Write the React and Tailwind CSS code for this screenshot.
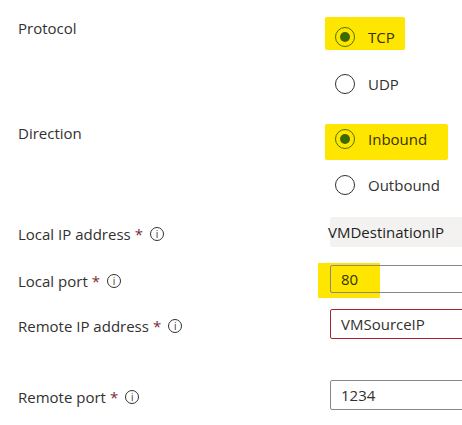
import React from "react";

const font = { fontFamily: '"Open Sans", "Noto Sans", sans-serif' };

const InfoIcon = () => (
  <span className="inline-flex items-center justify-center w-[14px] h-[14px] rounded-full border border-[#323130] text-[10px] leading-none text-[#323130] ml-[7px]">
    i
  </span>
);

const Radio = ({ label, checked }) => (
  <div className="flex items-center h-5 gap-[13px]">
    {checked ? (
      <span className="w-5 h-5 shrink-0 rounded-full border border-[#4a7300] flex items-center justify-center">
        <span className="w-[10px] h-[10px] rounded-full bg-[#3e6900]" />
      </span>
    ) : (
      <span className="w-5 h-5 shrink-0 rounded-full border border-[#323130] bg-white" />
    )}
    <span className={checked ? "text-[#363200]" : "text-[#323130]"}>{label}</span>
  </div>
);

const Label = ({ children, info = true }) => (
  <div className="w-[330px] shrink-0 pl-[18px] flex items-center pt-[4px] text-[#323130]">
    <span>{children}</span>
    {info && (
      <>
        <span className="ml-[4px] text-[#7a2a3a]">*</span>
        <InfoIcon />
      </>
    )}
  </div>
);

export default function App() {
  return (
    <div className="w-[462px] h-[425px] bg-white overflow-hidden text-[15px] leading-5" style={font}>
      {/* Protocol */}
      <div className="flex pt-[18px]">
        <div className="w-[335px] shrink-0 pl-[18px] text-[#323130]">Protocol</div>
        <div className="flex flex-col pt-[9px] gap-[27px]">
          <div className="relative">
            <div className="absolute left-[-10px] top-[-10px] w-[80px] h-[33px] bg-[#ffe600] rounded-[2px]" />
            <div className="relative">
              <Radio label="TCP" checked />
            </div>
          </div>
          <Radio label="UDP" />
        </div>
      </div>

      {/* Direction */}
      <div className="flex mt-[29px]">
        <div className="w-[335px] shrink-0 pl-[18px] text-[#323130]">Direction</div>
        <div className="flex flex-col pt-[6px] gap-[26px]">
          <div className="relative">
            <div className="absolute left-[-10px] top-[-5px] w-[123px] h-[36px] bg-[#ffe600] rounded-[2px]" />
            <div className="relative">
              <Radio label="Inbound" checked />
            </div>
          </div>
          <Radio label="Outbound" />
        </div>
      </div>

      {/* Local IP address */}
      <div className="flex items-center mt-[22px] h-[30px]">
        <Label>Local IP address</Label>
        <div className="w-[200px] shrink-0 h-[30px] bg-[#f3f2f1] rounded-[2px] flex items-center">
          <span className="-ml-[2px] text-[#201f1e]">VMDestinationIP</span>
        </div>
      </div>

      {/* Local port */}
      <div className="flex items-center mt-[18px] h-[28px]">
        <Label>Local port</Label>
        <div className="relative shrink-0">
          <div className="absolute left-[-12px] top-[-2px] w-[62px] h-[35px] bg-[#ffe600]" />
          <div className="relative w-[200px] h-[28px] border border-[#8a8886] rounded-[2px] flex items-center pl-[10px] text-[#363200]">
            80
          </div>
        </div>
      </div>

      {/* Remote IP address */}
      <div className="flex items-center mt-[16px] h-[30px]">
        <Label>Remote IP address</Label>
        <div className="w-[200px] shrink-0 h-[30px] border border-[#a4262c] rounded-[2px] flex items-center pl-[10px] text-[#323130]">
          VMSourceIP
        </div>
      </div>

      {/* Remote port */}
      <div className="flex items-center mt-[41px] h-[30px]">
        <Label>Remote port</Label>
        <div className="w-[200px] shrink-0 h-[30px] border border-[#8a8886] rounded-[2px] flex items-center pl-[10px] text-[#323130]">
          1234
        </div>
      </div>
    </div>
  );
}
